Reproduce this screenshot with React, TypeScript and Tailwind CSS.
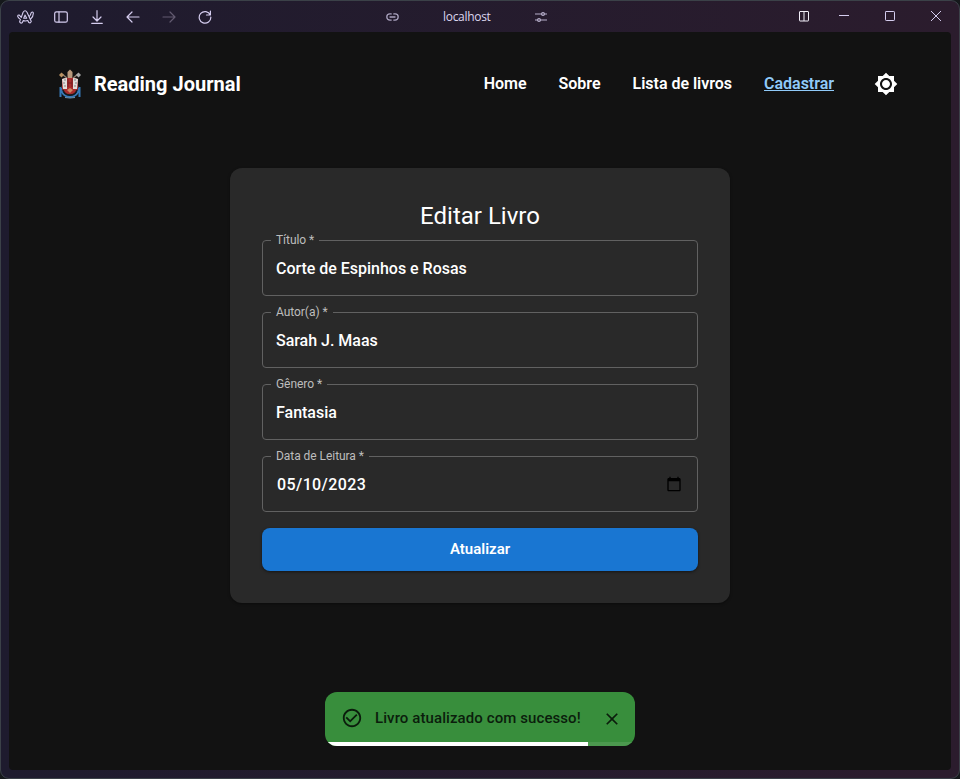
import React from 'react';

const line = { fill: 'none', stroke: 'currentColor', strokeLinecap: 'round', strokeLinejoin: 'round' } as const;

function BrowserBar() {
  return (
    <div className="-ml-2 flex h-[31px] shrink-0 items-center text-[#d5cdef]">
      <svg className="ml-4 h-4 w-[17px]" viewBox="0 0 17 16" {...line} strokeWidth="1.1">
        <path d="M6.1 3.2Q8.1.3 10 3.2L14.3 12.4Q13.5 14.6 11.8 13.6L10.8 11.5Q8.6 12.3 6.3 11.6L5.2 13.7Q3.5 14.8 2.6 12.8L3.4 10.4Q1.6 9.3.7 7.5.7 5.7 2.3 6.1L4.3 8.4ZM8 6.1 6.7 9.3 9.7 9.2ZM12.1 7.7Q13.7 6.3 14.1 3.8 15.5 2.3 16.4 3.9 16.4 7.6 13.4 10.4" />
      </svg>
      <svg className="ml-5 h-[12px] w-[14px]" viewBox="0 0 14 12" {...line} strokeWidth="1.2">
        <rect x=".7" y=".8" width="12.6" height="10.4" rx="1.8" />
        <path d="M5 1v10" />
      </svg>
      <svg className="ml-[23px] h-[14px] w-3" viewBox="0 0 12 14" {...line} strokeWidth="1.2">
        <path d="M6 .7v10M2 7l4 4 4-4M.7 13.3h10.6" />
      </svg>
      <svg className="ml-[23px] h-3 w-[14px]" viewBox="0 0 14 12" {...line} strokeWidth="1.2">
        <path d="M13 6H1M6 1 1 6l5 5" />
      </svg>
      <svg className="ml-[22px] h-3 w-[14px] text-[#625a70]" viewBox="0 0 14 12" {...line} strokeWidth="1.2">
        <path d="M1 6h12M8 1l5 5-5 5" />
      </svg>
      <svg className="ml-[22px] h-[14px] w-[14px]" viewBox="0 0 14 14" {...line} strokeWidth="1.2">
        <path d="M12.3 5A5.8 5.8 0 1 0 12.8 7M12.4 1v4H8.5" />
      </svg>
      <svg className="ml-[174px] h-2 w-[13px] text-[#aaa3bf]" viewBox="0 0 13 8" {...line} strokeWidth="1.3">
        <path d="M5.2.9H3.9a3.1 3.1 0 0 0 0 6.2h1.3M7.8.9h1.3a3.1 3.1 0 0 1 0 6.2H7.8M4 4h5" />
      </svg>
      <span className="ml-[44px] w-[49px] font-['Open_Sans',sans-serif] text-[12px] leading-4 tracking-[-0.3px] whitespace-nowrap text-[#dcd6ee]">localhost</span>
      <svg className="ml-[43px] h-3 w-3 text-[#b8b0cc]" viewBox="0 0 12 12" {...line} strokeWidth="1.2">
        <path d="M.5 3h6M9.5 3h2M.5 9h2M5.5 9h6" />
        <circle cx="8" cy="3" r="1.4" />
        <circle cx="4" cy="9" r="1.4" />
      </svg>
      <svg className="ml-[252px] h-[11px] w-[11px]" viewBox="0 0 11 11" fill="none" stroke="#f1eef8">
        <rect x=".5" y=".5" width="9" height="9.5" rx=".5" />
        <path d="M5 1v9" />
      </svg>
      <svg className="-mt-px ml-[29px] h-[10px] w-[10px]" viewBox="0 0 10 10" {...line}><path d="M0 4.5h10" /></svg>
      <svg className="-mt-px ml-9 h-[10px] w-[10px]" viewBox="0 0 10 10" {...line}><rect x=".5" y=".5" width="9" height="9" rx=".7" /></svg>
      <svg className="-mt-px ml-9 h-[10px] w-[10px]" viewBox="0 0 10 10" {...line}><path d="m.3.3 9.4 9.4M9.7.3.3 9.7" /></svg>
    </div>
  );
}

function Crest() {
  return (
    <svg className="h-[30px] w-[22px] shrink-0" viewBox="0 0 22 30">
      <path d="m3 5 16 13M19 5 3 18" stroke="#8b7868" strokeWidth="1.6" />
      <path d="m0 6 2.5-2.5L5 6 2.5 8.5Z" fill="#b99162" />
      <path d="M17 6l2.5-2.5L22 6l-2.5 2.5Z" fill="#a9a9a9" />
      <path d="M1.5 18v10M20.5 18v10M2 19q1 9 9 9t9-9" fill="none" stroke="#3679b6" strokeWidth="2" />
      <path d="M3 10q8-3 16 0v9q-1 6-8 7-7-1-8-7Z" fill="#a92c2c" />
      <path d="M3 10q2-1 5-1v11H4ZM14 9q3 0 5 1l-1 10h-4Z" fill="#e0dedb" />
      <path d="M5 11h2M4 14h2M5 17h2M15 11h2M16 14h2M15 17h2" stroke="#858585" />
      <path d="M9 10v8M13 10v8M9 14h4" stroke="#721f22" />
      <path d="M8.5 7V3L11 .5 13.5 3v4L13 9H9Z" fill="#b99a7d" />
      <path d="m8 21 3-2 3 2-3 3Z" fill="#ca8a67" />
      <path d="M4 21q2 5 7 5t7-5" fill="none" stroke="#171b20" strokeWidth="1.3" />
      <path d="M6 28.5q5 1 10 0" fill="none" stroke="#6e91ad" />
    </svg>
  );
}

function Header() {
  return (
    <header className="flex h-[104px] items-center pr-[53px] pl-[50px] text-white">
      <Crest />
      <span className="ml-[13px] text-[20px] leading-8 font-bold">Reading Journal</span>
      <nav className="ml-auto flex items-center gap-8 text-[16px] leading-6 font-semibold tracking-[-0.015px]">
        <a>Home</a>
        <a>Sobre</a>
        <a>Lista de livros</a>
        <a className="text-[#90caf9] underline">Cadastrar</a>
      </nav>
      <svg className="ml-10 h-6 w-6" viewBox="0 0 24 24" fill="currentColor">
        <path d="M20 8.69V4h-4.69L12 .69 8.69 4H4v4.69L.69 12 4 15.31V20h4.69L12 23.31 15.31 20H20v-4.69L23.31 12zM12 18c-3.31 0-6-2.69-6-6s2.69-6 6-6 6 2.69 6 6-2.69 6-6 6m0-10c-2.21 0-4 1.79-4 4s1.79 4 4 4 4-1.79 4-4-1.79-4-4-4" />
      </svg>
    </header>
  );
}

function Field({ label, value, date }: { label: string; value: string; date?: boolean }) {
  return (
    <fieldset className="-mt-[6px] h-[62px] min-w-0 rounded-[4px] border border-[#616161] px-[8px]">
      <legend className="px-[5px] text-[12px] leading-[12px] tracking-[-0.05px] text-[#bdbdbd]">{label} *</legend>
      <div className={date ? 'flex h-[46px] items-center pr-[7px] pl-[6px]' : 'flex h-[46px] items-center pl-[5px]'}>
        <span className={date ? 'text-[16px] leading-6 font-medium tracking-[0.4px] text-white' : 'text-[16px] leading-6 font-medium tracking-[-0.02px] text-white'}>{value}</span>
        {date && (
          <svg className="-mt-[2px] ml-auto h-4 w-4" viewBox="0 0 24 24" fill="black">
            <path d="M20 3h-1V1h-2v2H7V1H5v2H4c-1.1 0-2 .9-2 2v16c0 1.1.9 2 2 2h16c1.1 0 2-.9 2-2V5c0-1.1-.9-2-2-2m0 18H4V8h16z" />
          </svg>
        )}
      </div>
    </fieldset>
  );
}

function Toast() {
  return (
    <div className="mx-auto mt-[89px] flex h-[54px] w-[310px] flex-col overflow-hidden rounded-[12px] bg-[#388e3c] text-[#0b1d0c]">
      <div className="flex h-[50px] items-center pt-[2px] pl-4">
        <svg className="h-[22px] w-[22px]" viewBox="0 0 24 24" fill="currentColor">
          <path d="M16.59 7.58 10 14.17l-3.59-3.58L5 12l5 5 8-8zM12 2C6.48 2 2 6.48 2 12s4.48 10 10 10 10-4.48 10-10S17.52 2 12 2m0 18c-4.42 0-8-3.58-8-8s3.58-8 8-8 8 3.58 8 8-3.58 8-8 8" />
        </svg>
        <span className="ml-3 text-[15px] leading-5 font-medium tracking-[0.09px]">Livro atualizado com sucesso!</span>
        <svg className="mt-[2px] mr-[13px] ml-auto h-5 w-5" viewBox="0 0 24 24" fill="currentColor">
          <path d="M19 6.41 17.59 5 12 10.59 6.41 5 5 6.41 10.59 12 5 17.59 6.41 19 12 13.41 17.59 19 19 17.59 13.41 12z" />
        </svg>
      </div>
      <div className="h-1 bg-[#4c994f]"><div className="h-full w-[263px] bg-white" /></div>
    </div>
  );
}

export default function App() {
  return (
    <div className="h-[779px] w-[960px] bg-[#15181b]">
      <div className="flex h-full flex-col rounded-[9px] border border-[#3b4148] bg-linear-to-r from-[#1e1b2e] to-[#2b1c2d] px-2 pb-2">
        <BrowserBar />
        <main className="min-h-0 flex-1 overflow-hidden rounded-[4px] bg-[#121212] font-[Roboto,sans-serif]">
          <Header />
          <section className="mx-auto mt-8 h-[435px] w-[500px] rounded-[12px] bg-[#292929] p-8 shadow-[0_1px_3px_rgba(0,0,0,0.4)]">
            <h1 className="text-center text-[24px] leading-8 text-white">Editar Livro</h1>
            <form className="mt-2 flex flex-col gap-4">
              <Field label="Título" value="Corte de Espinhos e Rosas" />
              <Field label="Autor(a)" value="Sarah J. Maas" />
              <Field label="Gênero" value="Fantasia" />
              <Field label="Data de Leitura" value="05/10/2023" date />
              <button type="button" className="h-[43px] rounded-[8px] bg-[#1976d2] pb-[2px] text-[15px] leading-6 font-semibold text-white shadow-[0_1px_3px_rgba(0,0,0,0.5)]">Atualizar</button>
            </form>
          </section>
          <Toast />
        </main>
      </div>
    </div>
  );
}
